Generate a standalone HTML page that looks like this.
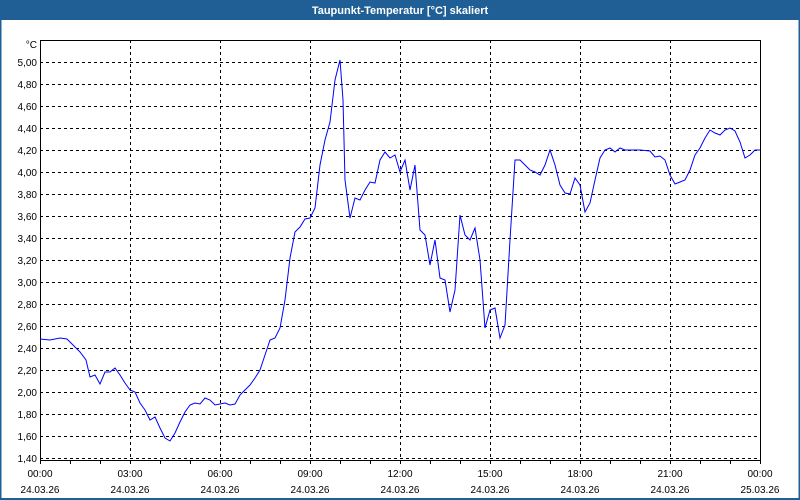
<!DOCTYPE html>
<html><head><meta charset="utf-8"><style>
html,body{margin:0;padding:0;width:800px;height:500px;overflow:hidden;background:#fff;font-family:"Liberation Sans",sans-serif}
</style></head><body>
<svg width="800" height="500" xmlns="http://www.w3.org/2000/svg" font-family="Liberation Sans, sans-serif">
<rect x="0" y="0" width="800" height="500" fill="#fff"/>
<rect x="0" y="0" width="800" height="20" fill="#1f5f96"/>
<rect x="0" y="0" width="1.5" height="500" fill="#1f5f96"/>
<rect x="798.5" y="0" width="1.5" height="500" fill="#1f5f96"/>
<rect x="0" y="498" width="800" height="2" fill="#1f5f96"/>
<text x="400" y="14" text-anchor="middle" fill="#fff" font-size="11" font-weight="bold">Taupunkt-Temperatur [°C] skaliert</text>
<g stroke="#000" stroke-width="1" stroke-dasharray="3,3" shape-rendering="crispEdges">
<line x1="40" y1="62.5" x2="760" y2="62.5"/><line x1="40" y1="84.5" x2="760" y2="84.5"/><line x1="40" y1="106.5" x2="760" y2="106.5"/><line x1="40" y1="128.5" x2="760" y2="128.5"/><line x1="40" y1="150.5" x2="760" y2="150.5"/><line x1="40" y1="172.5" x2="760" y2="172.5"/><line x1="40" y1="194.5" x2="760" y2="194.5"/><line x1="40" y1="216.5" x2="760" y2="216.5"/><line x1="40" y1="238.5" x2="760" y2="238.5"/><line x1="40" y1="260.5" x2="760" y2="260.5"/><line x1="40" y1="282.5" x2="760" y2="282.5"/><line x1="40" y1="304.5" x2="760" y2="304.5"/><line x1="40" y1="326.5" x2="760" y2="326.5"/><line x1="40" y1="348.5" x2="760" y2="348.5"/><line x1="40" y1="370.5" x2="760" y2="370.5"/><line x1="40" y1="392.5" x2="760" y2="392.5"/><line x1="40" y1="414.5" x2="760" y2="414.5"/><line x1="40" y1="436.5" x2="760" y2="436.5"/><line x1="40" y1="458.5" x2="760" y2="458.5"/>
<line x1="130.5" y1="40" x2="130.5" y2="460"/><line x1="220.5" y1="40" x2="220.5" y2="460"/><line x1="310.5" y1="40" x2="310.5" y2="460"/><line x1="400.5" y1="40" x2="400.5" y2="460"/><line x1="490.5" y1="40" x2="490.5" y2="460"/><line x1="580.5" y1="40" x2="580.5" y2="460"/><line x1="670.5" y1="40" x2="670.5" y2="460"/>
</g>
<g stroke="#000" stroke-width="1" fill="none" shape-rendering="crispEdges">
<rect x="40.5" y="40.5" width="720" height="420"/>
<path d="M40.5 460v4M70.5 460v4M100.5 460v4M130.5 460v4M160.5 460v4M190.5 460v4M220.5 460v4M250.5 460v4M280.5 460v4M310.5 460v4M340.5 460v4M370.5 460v4M400.5 460v4M430.5 460v4M460.5 460v4M490.5 460v4M520.5 460v4M550.5 460v4M580.5 460v4M610.5 460v4M640.5 460v4M670.5 460v4M700.5 460v4M730.5 460v4M760.5 460v4"/>
</g>
<g font-size="10" fill="#000" text-anchor="end">
<text x="37" y="48">°C</text>
<text x="37" y="66">5,00</text><text x="37" y="88">4,80</text><text x="37" y="110">4,60</text><text x="37" y="132">4,40</text><text x="37" y="154">4,20</text><text x="37" y="176">4,00</text><text x="37" y="198">3,80</text><text x="37" y="220">3,60</text><text x="37" y="242">3,40</text><text x="37" y="264">3,20</text><text x="37" y="286">3,00</text><text x="37" y="308">2,80</text><text x="37" y="330">2,60</text><text x="37" y="352">2,40</text><text x="37" y="374">2,20</text><text x="37" y="396">2,00</text><text x="37" y="418">1,80</text><text x="37" y="440">1,60</text><text x="37" y="462">1,40</text>
</g>
<g font-size="10" fill="#000" text-anchor="middle">
<text x="40" y="477">00:00</text><text x="40" y="493">24.03.26</text>
<text x="130" y="477">03:00</text><text x="130" y="493">24.03.26</text>
<text x="220" y="477">06:00</text><text x="220" y="493">24.03.26</text>
<text x="310" y="477">09:00</text><text x="310" y="493">24.03.26</text>
<text x="400" y="477">12:00</text><text x="400" y="493">24.03.26</text>
<text x="490" y="477">15:00</text><text x="490" y="493">24.03.26</text>
<text x="580" y="477">18:00</text><text x="580" y="493">24.03.26</text>
<text x="670" y="477">21:00</text><text x="670" y="493">24.03.26</text>
<text x="760" y="477">00:00</text><text x="760" y="493">25.03.26</text>
</g>
<polyline fill="none" stroke="#0000ff" stroke-width="1" points="40,339 50,340 60,338 67,339 72,344 80,352 86,360 90,377 95,375 100,384 105,372 110,372 115,368 120,375 125,383 130,390 135,392 140,403 145,410 150,420 155,417 160,428 165,438 170,441 175,433 180,422 185,412 190,405 195,403 200,404 205,398 210,400 215,405 220,404 225,403 230,405 235,404 240,395 245,390 250,385 255,378 260,370 265,355 270,340 275,338 280,328 285,300 290,258 295,232 300,227 305,219 310,218 315,208 320,165 325,140 330,122 335,80 340,60 343,100 345,180 350,218 355,198 360,200 365,190 370,182 375,183 380,160 385,152 390,158 395,155 400,172 405,160 410,190 415,165 420,230 425,235 430,265 435,240 440,278 445,280 450,312 455,290 460,215 465,235 470,240 475,228 480,260 485,328 490,310 495,308 500,338 505,325 510,240 515,160 520,160 525,165 530,170 535,172 540,175 545,165 550,150 555,165 560,185 565,193 570,194 575,178 580,185 585,212 590,203 595,180 600,158 605,150 610,148 615,152 620,148 625,150 630,150 640,150 650,151 655,157 660,156 665,160 670,175 675,184 680,182 685,180 690,170 695,155 700,148 705,138 710,130 715,133 720,135 725,130 730,128 735,131 740,142 745,158 750,155 755,150 760,150"/>
</svg>
</body></html>
